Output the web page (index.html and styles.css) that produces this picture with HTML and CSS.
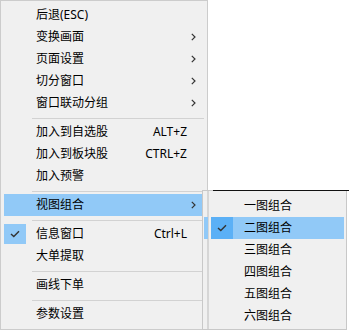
FILE: index.html
```html
<!DOCTYPE html>
<html lang="zh-CN">
<head>
    <meta charset="UTF-8">
    <title>视图菜单</title>
    <link rel="stylesheet" href="styles.css">
</head>
<body>
    <div class="stage">
        <!-- main context menu -->
        <div class="menu">
            <div class="item"><span class="ck"></span><span class="lbl">后退(ESC)</span><span class="key"></span><span class="tail"></span></div>
            <div class="item"><span class="ck"></span><span class="lbl">变换画面</span><span class="key"></span><span class="tail"><svg class="arr" width="5" height="8" viewBox="0 0 5 8"><polyline points="0.8,0.8 4,4 0.8,7.2"/></svg></span></div>
            <div class="item"><span class="ck"></span><span class="lbl">页面设置</span><span class="key"></span><span class="tail"><svg class="arr" width="5" height="8" viewBox="0 0 5 8"><polyline points="0.8,0.8 4,4 0.8,7.2"/></svg></span></div>
            <div class="item"><span class="ck"></span><span class="lbl">切分窗口</span><span class="key"></span><span class="tail"><svg class="arr" width="5" height="8" viewBox="0 0 5 8"><polyline points="0.8,0.8 4,4 0.8,7.2"/></svg></span></div>
            <div class="item"><span class="ck"></span><span class="lbl">窗口联动分组</span><span class="key"></span><span class="tail"><svg class="arr" width="5" height="8" viewBox="0 0 5 8"><polyline points="0.8,0.8 4,4 0.8,7.2"/></svg></span></div>
            <div class="sep"></div>
            <div class="item"><span class="ck"></span><span class="lbl">加入到自选股</span><span class="key">ALT+Z</span><span class="tail"></span></div>
            <div class="item"><span class="ck"></span><span class="lbl">加入到板块股</span><span class="key">CTRL+Z</span><span class="tail"></span></div>
            <div class="item"><span class="ck"></span><span class="lbl">加入预警</span><span class="key"></span><span class="tail"></span></div>
            <div class="sep"></div>
            <div class="item active"><span class="ck"></span><span class="lbl">视图组合</span><span class="key"></span><span class="tail"><svg class="arr" width="5" height="8" viewBox="0 0 5 8"><polyline points="0.8,0.8 4,4 0.8,7.2"/></svg></span></div>
            <div class="sep"></div>
            <div class="item checked"><span class="ck"><svg width="10" height="8" viewBox="0 0 10 8"><polyline points="1,4 3.8,6.6 9,1.2"/></svg></span><span class="lbl">信息窗口</span><span class="key">Ctrl+L</span><span class="tail"></span></div>
            <div class="item"><span class="ck"></span><span class="lbl">大单提取</span><span class="key"></span><span class="tail"></span></div>
            <div class="sep"></div>
            <div class="item"><span class="ck"></span><span class="lbl">画线下单</span><span class="key"></span><span class="tail"></span></div>
            <div class="sep"></div>
            <div class="item"><span class="ck"></span><span class="lbl">参数设置</span><span class="key"></span><span class="tail"></span></div>
        </div>

        <!-- 视图组合 submenu -->
        <div class="submenu">
            <div class="sub-item"><span class="strip"></span><span class="gap"></span><span class="ck"></span><span class="lbl">一图组合</span></div>
            <div class="sub-item active"><span class="strip"></span><span class="gap"></span><span class="ck"><svg width="10" height="8" viewBox="0 0 10 8"><polyline points="1,4 3.8,6.6 9,1.2"/></svg></span><span class="lbl">二图组合</span></div>
            <div class="sub-item"><span class="strip"></span><span class="gap"></span><span class="ck"></span><span class="lbl">三图组合</span></div>
            <div class="sub-item"><span class="strip"></span><span class="gap"></span><span class="ck"></span><span class="lbl">四图组合</span></div>
            <div class="sub-item"><span class="strip"></span><span class="gap"></span><span class="ck"></span><span class="lbl">五图组合</span></div>
            <div class="sub-item"><span class="strip"></span><span class="gap"></span><span class="ck"></span><span class="lbl">六图组合</span></div>
        </div>
    </div>
</body>
</html>
```

FILE: styles.css
```css
body {
    margin: 0;
    background: #ffffff;
    font-family: "Noto Sans", "Noto Sans CJK SC", sans-serif;
    font-size: 12px;
    color: #000;
}
.stage {
    position: relative;
    width: 349px;
    height: 332px;
    overflow: hidden;
}

/* main menu */
.menu {
    width: 208px;
    box-sizing: border-box;
    background: #f0f0f0;
    border: 1px solid #cccccc;
    padding: 3px 3px 4px 3px;
}
.item {
    display: flex;
    align-items: center;
    height: 22px;
    line-height: 22px;
}
.item .ck {
    width: 22px;
    height: 20px;
    display: flex;
    align-items: center;
    justify-content: center;
}
.item .lbl {
    flex: 1;
    padding-left: 10px;
    white-space: nowrap;
}
.item .key {
    white-space: nowrap;
}
.item .tail {
    width: 17px;
    height: 22px;
    display: flex;
    align-items: center;
}
.arr {
    margin-left: 4px;
    fill: none;
    stroke: #333;
    stroke-width: 1.2;
}
.item.active {
    background: #91c9f7;
}
.item.checked .ck {
    background: #91c9f7;
}
.ck svg {
    fill: none;
    stroke: #333;
    stroke-width: 1.4;
}
.sep {
    height: 1px;
    margin: 4px 0 2px 28px;
    background: #d2d2d2;
}

/* submenu, overlaps the main menu */
.submenu {
    position: absolute;
    left: 202px;
    top: 190px;
    width: 145px;
    height: 140px;
    box-sizing: border-box;
    border: 1px solid #c8c8c8;
    padding: 4px 2px 2px 1px;
    background: linear-gradient(90deg, transparent 4px, #d6d6d6 4px, #d6d6d6 6px, transparent 6px), #f0f0f0;
}
.submenu::before {
    content: "";
    position: absolute;
    left: 10px;
    right: -10px;
    top: -1px;
    height: 1px;
    background: #111;
}
.sub-item {
    display: flex;
    align-items: center;
    height: 22px;
    line-height: 22px;
}
.sub-item .strip {
    width: 4px;
    height: 22px;
}
.sub-item .gap {
    width: 3px;
    height: 22px;
}
.sub-item .ck {
    width: 22px;
    height: 22px;
    display: flex;
    align-items: center;
    justify-content: center;
}
.sub-item .lbl {
    flex: 1;
    padding-left: 11px;
    white-space: nowrap;
}
.sub-item.active .strip,
.sub-item.active .lbl {
    background: #91c9f7;
}
.sub-item.active .ck {
    background: #5bb0f6;
}
```
